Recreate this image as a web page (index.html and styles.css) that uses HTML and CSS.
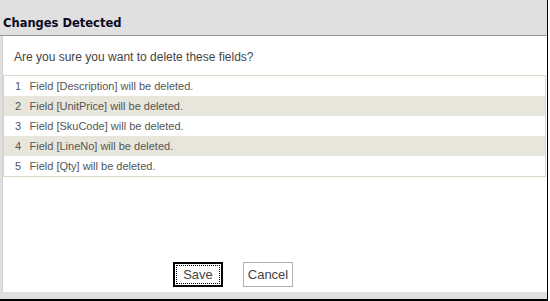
FILE: index.html
```html
<!DOCTYPE html>
<html lang="en">

<head>
    <meta charset="UTF-8">
    <title>Changes Detected</title>
    <link rel="stylesheet" href="styles.css">
</head>

<body>
    <div class="window">
        <div class="title-bar">
            <h2 class="title">Changes Detected</h2>
        </div>
        <div class="content">
            <p class="question">Are you sure you want to delete these fields?</p>
            <table class="field-list">
                <tr><td class="num">1</td><td>Field [Description] will be deleted.</td></tr>
                <tr class="alt"><td class="num">2</td><td>Field [UnitPrice] will be deleted.</td></tr>
                <tr><td class="num">3</td><td>Field [SkuCode] will be deleted.</td></tr>
                <tr class="alt"><td class="num">4</td><td>Field [LineNo] will be deleted.</td></tr>
                <tr><td class="num">5</td><td>Field [Qty] will be deleted.</td></tr>
            </table>
            <div class="buttons">
                <button type="button" class="btn btn-focus"><span>Save</span></button>
                <button type="button" class="btn">Cancel</button>
            </div>
        </div>
        <div class="footer"></div>
    </div>
</body>

</html>
```

FILE: styles.css
```css
body {
    margin: 0;
    width: 550px;
    height: 301px;
    overflow: hidden;
    background-color: #fff;
    font-family: "Liberation Sans", Arial, sans-serif;
}

.window {
    width: 548px;
    height: 301px;
    box-sizing: border-box;
    border-right: 1px solid #000;
    border-bottom: 2px solid #000;
    background-color: #e0e0e0;
    display: flex;
    flex-direction: column;
}

.title-bar {
    height: 35px;
    border-bottom: 1px solid #999;
    background-color: #e0e0e0;
    display: flex;
    align-items: flex-end;
}

.title {
    margin: 0 0 5px 3px;
    font-family: "DejaVu Sans", Verdana, sans-serif;
    font-size: 11.5px;
    font-weight: bold;
    color: #0a0a1e;
}

.content {
    flex: 1;
    margin-left: 2px;
    background-color: #fff;
    border-left: 1px solid #d0d0d0;
}

.question {
    margin: 0;
    padding: 14px 0 0 11px;
    height: 25px;
    font-size: 12px;
    line-height: 14px;
    color: #444;
}

.field-list {
    width: 543px;
    margin-left: 0;
    border-collapse: collapse;
    border: 1px solid #d8d8c6;
}

.field-list td {
    height: 20px;
    padding: 0;
    font-size: 11px;
    color: #555;
}

.field-list .num {
    width: 26px;
    padding-left: 11px;
    box-sizing: border-box;
}

.field-list .alt td {
    background-color: #e8e6da;
}

.buttons {
    margin-top: 85px;
    padding-left: 170px;
    display: flex;
    gap: 20px;
}

.btn {
    width: 50px;
    height: 25px;
    padding: 0;
    background-color: #fff;
    border: 1px solid #b0b0b0;
    font-family: "Liberation Sans", Arial, sans-serif;
    font-size: 13px;
    color: #444;
    display: flex;
    align-items: center;
    justify-content: center;
}

.btn-focus {
    border: 2px solid #000;
}

.btn-focus span {
    border: 1px dotted #000;
    width: 42px;
    height: 17px;
    line-height: 17px;
    text-align: center;
}

.footer {
    height: 7px;
    margin-left: 3px;
    background-color: #e0e0e0;
}
```
